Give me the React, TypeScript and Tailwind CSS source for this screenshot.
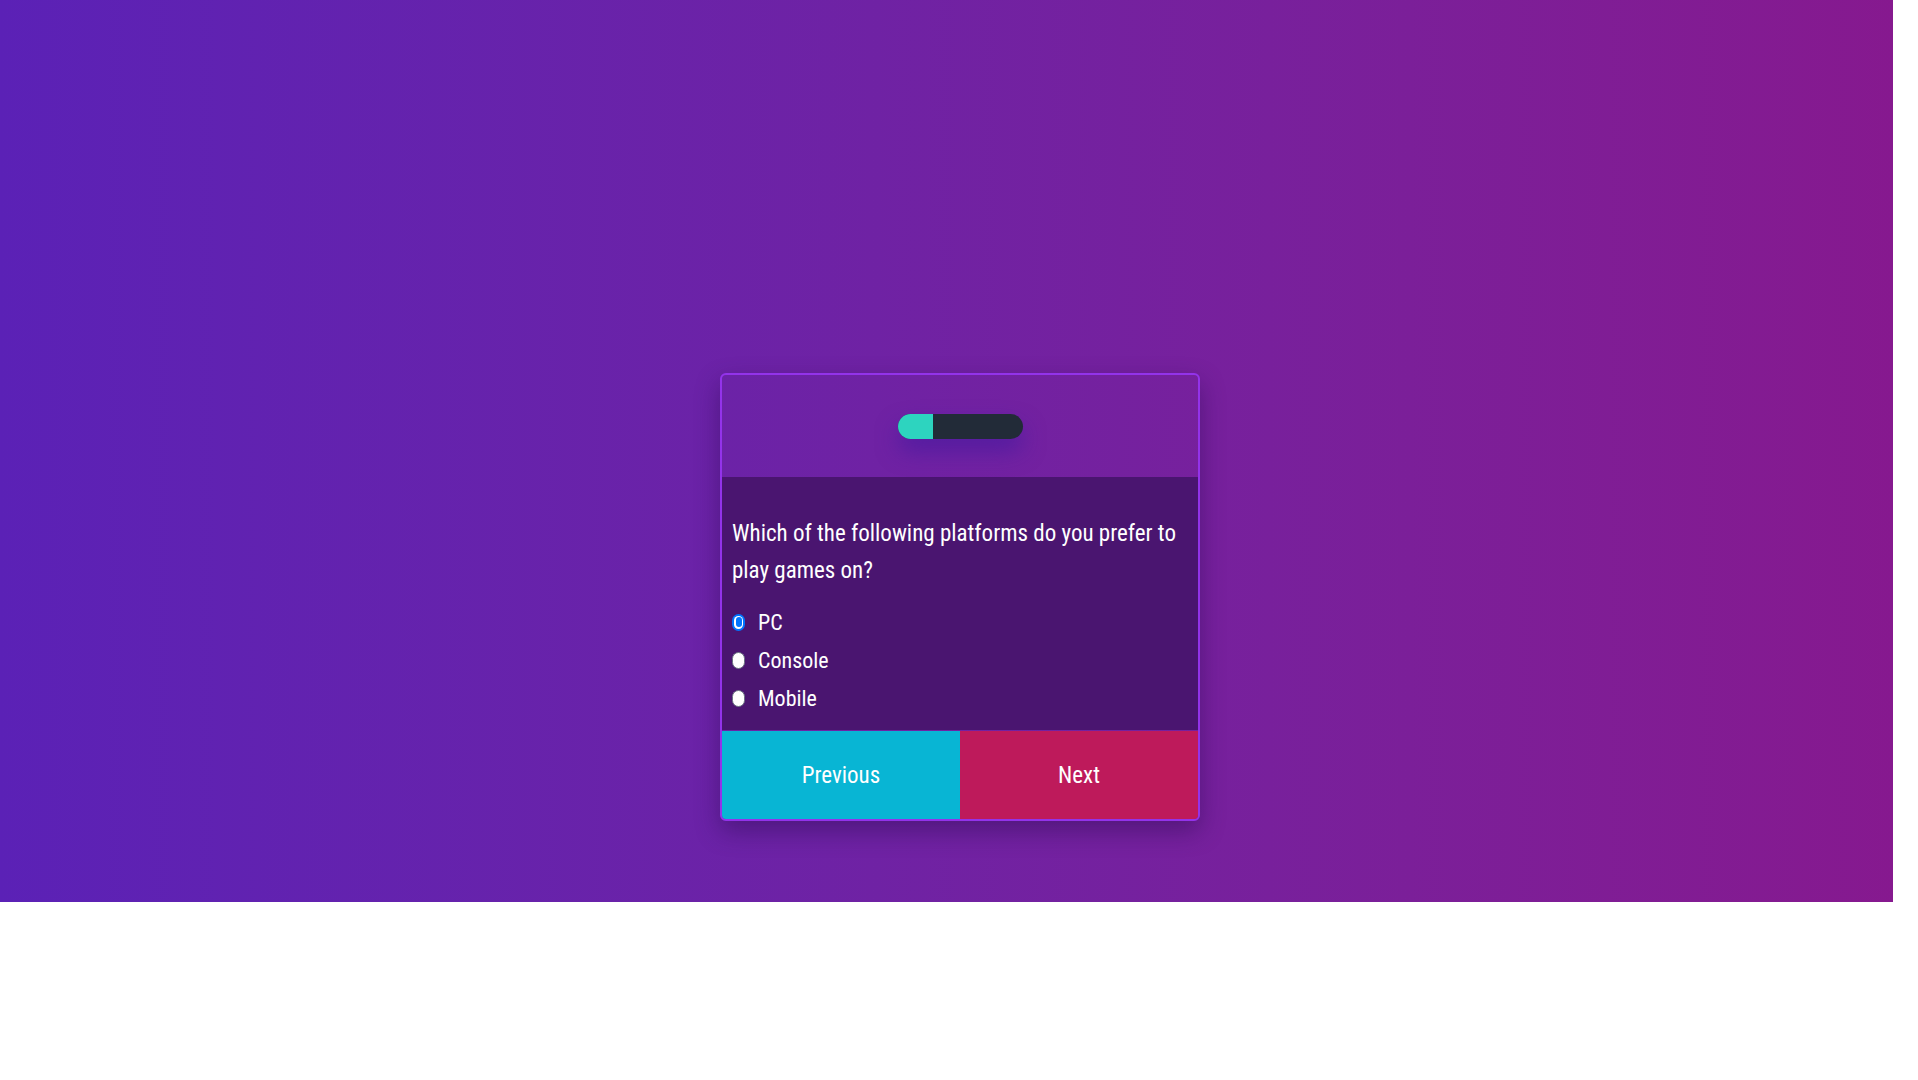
const font = `[font-family:"Ubuntu_Condensed","Roboto_Condensed","Roboto",sans-serif]`;

const options = [
  { label: "PC", checked: true },
  { label: "Console", checked: false },
  { label: "Mobile", checked: false },
];

function Radio({ checked }: { checked: boolean }) {
  if (checked) {
    return (
      <span className="flex h-[17px] w-[13px] items-center justify-center rounded-full bg-[#0075ff]">
        <span className="flex h-[13px] w-[9px] items-center justify-center rounded-full bg-white">
          <span className="h-[10px] w-[6px] rounded-full bg-[#0075ff]" />
        </span>
      </span>
    );
  }
  return (
    <span className="h-[17px] w-[13px] rounded-full border border-gray-500 bg-white" />
  );
}

export default function App() {
  return (
    <div className={`min-h-screen bg-white ${font}`}>
      <div
        className={`
          flex h-[902px] w-[1893px] items-start justify-center bg-gradient-to-r
          from-[#5b21b6] to-[#86198f] pt-[373px] pl-[27px]
        `}
      >
        <div
          className={`
            w-[480px] overflow-hidden rounded-md border-2 border-[#9333ea]
            shadow-[0_10px_25px_rgba(40,10,80,0.45)]
          `}
        >
          {/* Progress */}
          <div className="flex h-[102px] items-center justify-center">
            <div
              className={`
                flex h-[25px] w-[125px] overflow-hidden rounded-full bg-[#222b38]
                shadow-[0_12px_22px_rgba(70,25,160,0.7)]
              `}
            >
              <div className="w-[35px] bg-[#2dd4bf]" />
            </div>
          </div>

          {/* Question */}
          <div className="h-[253px] bg-[#4a1570] px-[10px] pt-[38px] text-white">
            <p className="text-[23px] leading-[37px]">
              Which of the following platforms do you prefer to play games on?
            </p>
            <div className="mt-[14px] flex flex-col">
              {options.map((o) => (
                <label
                  key={o.label}
                  className="flex h-[38px] items-center gap-[13px] text-[22px]"
                >
                  <Radio checked={o.checked} />
                  <span>{o.label}</span>
                </label>
              ))}
            </div>
          </div>

          {/* Buttons */}
          <div className="grid h-[89px] grid-cols-2 pt-[1px] text-[23px] text-white">
            <button className="bg-[#08b5d4] pt-[3px]">Previous</button>
            <button className="bg-[#be1a5b] pt-[3px]">Next</button>
          </div>
        </div>
      </div>
    </div>
  );
}
